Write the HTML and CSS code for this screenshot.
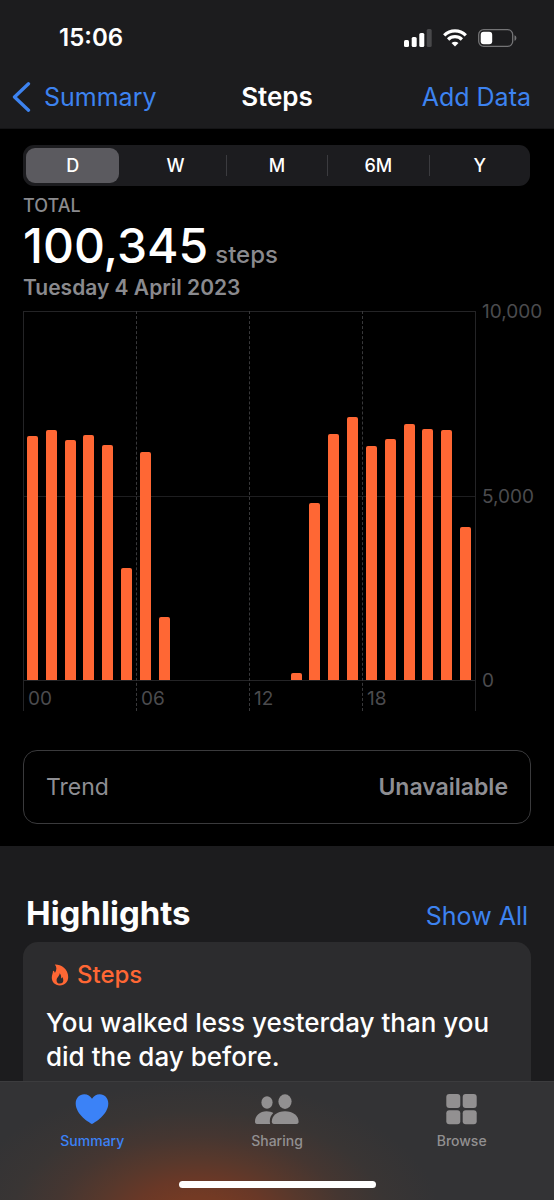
FILE: index.html
```html
<!DOCTYPE html>
<html lang="en">
<head>
<meta charset="utf-8">
<meta name="viewport" content="width=device-width, initial-scale=1">
<title>Steps</title>
<link rel="stylesheet" href="styles.css">
</head>
<body>
<header class="top">
  <div class="status">
    <span class="clock">15:06</span>
    <div class="status-icons">
      <svg width="28" height="18" viewBox="0 0 28 18" aria-label="Signal"><g fill="#fff"><rect x="0" y="11" width="5" height="7" rx="1.5"/><rect x="7.700" y="8" width="5" height="10" rx="1.500"/><rect x="15.300" y="4" width="5" height="14" rx="1.500"/></g><rect x="22.700" y="0" width="5" height="18" rx="1.500" fill="#48484a"/></svg>
      <svg width="24" height="18" viewBox="0 0 24 18" aria-label="Wi-Fi"><g fill="none" stroke="#fff" stroke-width="3.200"><path d="M1.200 6.300a15.400 15.400 0 0 1 21.600 0"/><path d="M5.100 10.500a9.800 9.800 0 0 1 13.800 0"/></g><path d="M12 17.600l-3.500-3.500a5 5 0 0 1 7 0z" fill="#fff"/></svg>
      <svg width="39" height="18" viewBox="0 0 39 18" aria-label="Battery"><rect x=".7" y=".7" width="34" height="16.600" rx="5" fill="none" stroke="#747476" stroke-width="1.300"/><rect x="2.700" y="2.700" width="11.500" height="12.600" rx="3" fill="#fff"/><path d="M36.500 6.200c2.500.8 2.500 4.800 0 5.600z" fill="#747476"/></svg>
    </div>
  </div>
  <nav class="navbar">
    <button class="link back"><svg width="19" height="30" viewBox="0 0 19 30" aria-hidden="true"><path d="M16.500 1.800L2.500 15l14 13.200" fill="none" stroke="#3d83f0" stroke-width="3.300" stroke-linecap="round" stroke-linejoin="round"/></svg>Summary</button>
    <h1 class="title">Steps</h1>
    <button class="link add">Add Data</button>
  </nav>
</header>

<main class="main">
  <section class="overview">
    <div class="segments" role="group" aria-label="Period">
      <button class="segment selected" aria-pressed="true">D</button>
      <button class="segment" aria-pressed="false">W</button>
      <button class="segment" aria-pressed="false">M</button>
      <button class="segment" aria-pressed="false">6M</button>
      <button class="segment" aria-pressed="false">Y</button>
    </div>
    <div class="total">
      <div class="caption">TOTAL</div>
      <div class="amount"><span class="value">100,345</span><span class="unit">steps</span></div>
      <div class="date">Tuesday 4 April 2023</div>
    </div>
    <div class="chart">
      <div class="frame"></div>
      <div class="hours"><span>00</span><span>06</span><span>12</span><span>18</span></div>
      <div class="bars">
        <i style="height:66.0%"></i><i style="height:67.7%"></i><i style="height:65.1%"></i><i style="height:66.5%"></i><i style="height:63.7%"></i><i style="height:30.3%"></i>
        <i style="height:61.9%"></i><i style="height:17.0%"></i><i style="height:0%"></i><i style="height:0%"></i><i style="height:0%"></i><i style="height:0%"></i>
        <i style="height:0%"></i><i style="height:0%"></i><i style="height:1.9%"></i><i style="height:47.9%"></i><i style="height:66.7%"></i><i style="height:71.3%"></i>
        <i style="height:63.4%"></i><i style="height:65.3%"></i><i style="height:69.4%"></i><i style="height:68.0%"></i><i style="height:67.8%"></i><i style="height:41.4%"></i>
      </div>
      <div class="scale"><span>10,000</span><span>5,000</span><span>0</span></div>
    </div>
    <div class="trend"><span>Trend</span><strong>Unavailable</strong></div>
  </section>

  <section class="highlights">
    <div class="heading"><h2>Highlights</h2><button class="link show">Show All</button></div>
    <article class="card">
      <h3 class="topic"><svg width="18" height="22" viewBox="0 0 18 22" aria-hidden="true"><path fill="#ff6734" fill-rule="evenodd" d="M3.800.6C10 .4 17.200 5 17.200 13c0 5-3.400 8.400-8.400 8.400C3.900 21.400.8 18.200.8 13.800.8 10.800 2 9.300 2 6.700c1.200.3 1.700 1.200 1.900 2.200C5.800 6.200 6 3 3.800.6zM8.600 9.200c.3 2.700-3 4-3 7a3.300 3.300 0 0 0 6.700.1c0-1.400-.4-2.500-1-3.300-.2.800-.6 1.200-1.200 1.400.3-2-.2-4-1.500-5.200z"/></svg>Steps</h3>
      <p class="message">You walked less yesterday than you did the day before.</p>
    </article>
  </section>
</main>

<footer class="dock">
  <nav class="tabs">
    <button class="tab active"><svg width="34" height="32" viewBox="0 0 34 32" aria-hidden="true"><path fill="currentColor" d="M17 31C14.500 29.800.7 21.500.7 10.500.7 5 4.500 1.200 9.200 1.200c3.400 0 6.200 1.700 7.800 4.600 1.600-2.900 4.400-4.600 7.800-4.600 4.700 0 8.500 3.800 8.500 9.300C33.300 21.500 19.500 29.800 17 31z"/></svg>Summary</button>
    <button class="tab"><svg width="44" height="32" viewBox="0 0 44 32" aria-hidden="true"><g fill="currentColor"><ellipse cx="12" cy="9.500" rx="5.600" ry="6.200"/><path d="M0 28.500c0-5.500 5-10.300 11.500-10.300 3 0 5 .7 6.800 1.800-2.200 2-3.500 4.900-3.500 8 0 1.200.1 2 .4 2.900H2C.5 30.900 0 30.100 0 28.500z"/><ellipse cx="30" cy="8.600" rx="6.600" ry="7.300"/><path d="M16.800 28.500c0-5.500 5.200-10.300 13.200-10.300s13.600 4.800 13.600 10.300c0 1.700-.6 2.400-2.200 2.400H19c-1.600 0-2.200-.7-2.200-2.400z"/></g></svg>Sharing</button>
    <button class="tab"><svg width="31" height="32" viewBox="0 0 31 32" aria-hidden="true"><g fill="currentColor"><rect x=".3" y="1" width="14" height="14" rx="3"/><rect x="16.700" y="1" width="14" height="14" rx="3"/><rect x=".3" y="17.300" width="14" height="14" rx="3"/><rect x="16.700" y="17.300" width="14" height="14" rx="3"/></g></svg>Browse</button>
  </nav>
  <div class="home"></div>
</footer>
</body>
</html>
```
FILE: styles.css
```css
* { box-sizing: border-box; }
body {
  margin: 0;
  min-height: 100vh;
  display: flex;
  flex-direction: column;
  background: #000;
  color: #fff;
  font-family: Inter, "Liberation Sans", sans-serif;
}
button { border: 0; padding: 0; background: none; color: inherit; font: inherit; cursor: pointer; }
h1, h2, h3, p { margin: 0; }
svg { display: block; flex: none; }

.top { height: 129px; background: #1c1c1e; border-bottom: 1px solid #141416; }
.status { display: flex; justify-content: space-between; align-items: center; height: 66px; padding: 9px 37px 0 59px; }
.clock { font-size: 24px; line-height: 28px; font-weight: 600; }
.status-icons { display: flex; gap: 11px; }
.navbar { display: grid; grid-template-columns: 1fr auto 1fr; align-items: center; height: 62px; padding: 0 23px; }
.link { color: #3d83f0; font-size: 25px; line-height: 32px; }
.back { display: flex; align-items: center; gap: 13px; justify-self: start; margin-left: -11px; }
.add { justify-self: end; }
.title { font-size: 26px; line-height: 32px; font-weight: 600; }

.main { flex: 1; display: flex; flex-direction: column; }
.overview { padding: 16px 23px 22px; }
.segments { display: grid; grid-template-columns: repeat(5, 1fr); height: 41px; margin-right: 1px; border-radius: 11px; background: #1c1c1f; align-items: center; }
.segment { height: 21px; border-left: 1px solid #3b3b3f; font-size: 18px; line-height: 21px; font-weight: 500; }
.segment.selected { height: 35px; margin: 0 5px 0 3px; border: 0; border-radius: 9px; background: #5b5a5f; }
.segment.selected + .segment { border-color: transparent; }

.total { padding-top: 9px; color: #8a8a8e; }
.caption { font-size: 18px; line-height: 22px; font-weight: 500; }
.amount { display: flex; align-items: baseline; gap: 7px; height: 59px; }
.value { font-size: 48px; line-height: 58px; font-weight: 500; color: #fff; }
.unit { font-size: 24px; line-height: 28px; font-weight: 500; }
.date { font-size: 21px; line-height: 24px; font-weight: 600; }

.chart { display: grid; grid-template-columns: 1fr 55px; grid-template-rows: 370px 30px; margin-top: 11px; color: #4b4b4e; font-size: 19px; line-height: 22px; }
.frame { grid-area: 1 / 1; border: solid #242426; border-width: 1px 0; background: linear-gradient(#1e1e20, #1e1e20) 0 50% / 100% 1px no-repeat; }
.hours { grid-area: 1 / 1 / 3 / 2; display: grid; grid-template-columns: repeat(4, 1fr); border-right: 1px solid #242426; }
.hours span { display: flex; align-items: end; padding: 0 0 1px 4px; border-left: 1px dashed #38383a; }
.hours span:first-child { border-left: 1px solid #242426; }
.bars { grid-area: 1 / 1; display: grid; grid-template-columns: repeat(24, 1fr); align-items: end; justify-items: center; padding: 0 1px 1px 0; }
.bars i { width: 11px; border-radius: 2px 2px 0 0; background: #ff6734; }
.scale { grid-area: 1 / 2; display: flex; flex-direction: column; justify-content: space-between; margin: -10px 0 -11px; padding-left: 6px; white-space: nowrap; }

.trend { display: flex; justify-content: space-between; align-items: center; height: 74px; margin-top: 39px; padding: 0 22px; border: 1px solid #3a3a3c; border-radius: 14px; color: #8e8e93; font-size: 23px; line-height: 28px; }
.trend strong { font-weight: 600; }

.highlights { flex: 1; display: flex; flex-direction: column; padding: 47px 23px 0; background: #1c1c1e; }
.heading { display: flex; justify-content: space-between; align-items: baseline; height: 49px; padding: 0 3px; }
.heading h2 { font-size: 33px; line-height: 40px; font-weight: 700; }
.card { flex: 1; padding: 18px 23px 0; border-radius: 15px 15px 0 0; background: #2c2c2e; }
.topic { display: flex; align-items: center; gap: 8px; padding-left: 5px; color: #ff6734; font-size: 24px; line-height: 30px; font-weight: 500; }
.message { margin-top: 16px; font-size: 26px; line-height: 34px; font-weight: 500; }

.dock { position: sticky; bottom: 0; height: 119px; padding-top: 11px; border-top: 1px solid #3c3c3e; background: radial-gradient(ellipse 240px 135px at 36% 114%, #773a23 0%, #733a24 15%, #693827 28%, #57382c 43%, #453631 60%, #393534 78%, #333335 100%), #333335; display: flex; flex-direction: column; justify-content: space-between; align-items: center; }
.tabs { display: grid; grid-template-columns: repeat(3, 1fr); width: 100%; }
.tab { display: flex; flex-direction: column; align-items: center; gap: 7px; color: #929091; font-size: 14px; line-height: 18px; font-weight: 500; }
.active { color: #3b82f7; }
.home { width: 197px; height: 7px; margin-bottom: 12px; border-radius: 4px; background: #fff; }
```
